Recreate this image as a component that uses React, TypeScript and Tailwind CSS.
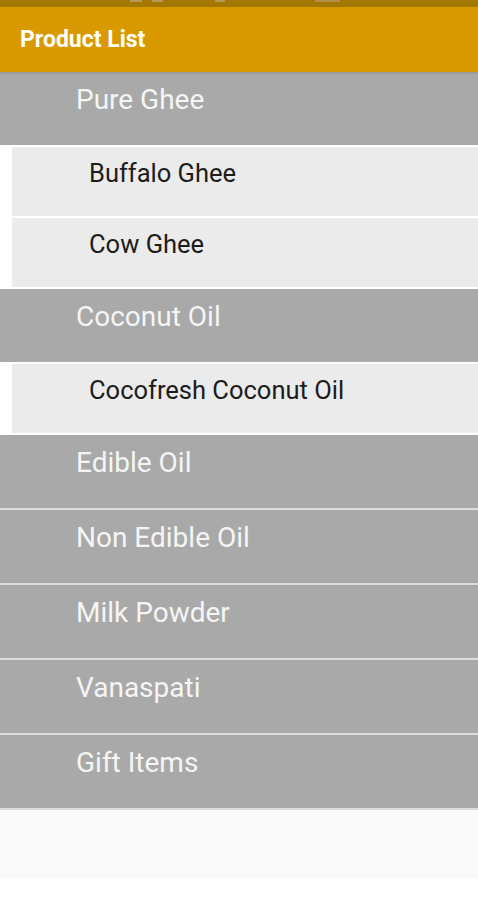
import React from "react";

type Group = { name: string; children?: string[] };

const groups: Group[] = [
  { name: "Pure Ghee", children: ["Buffalo Ghee", "Cow Ghee"] },
  { name: "Coconut Oil", children: ["Cocofresh Coconut Oil"] },
  { name: "Edible Oil" },
  { name: "Non Edible Oil" },
  { name: "Milk Powder" },
  { name: "Vanaspati" },
  { name: "Gift Items" },
];

export default function App() {
  return (
    <div
      className="w-[478px] h-[900px] bg-white flex flex-col"
      style={{ fontFamily: "Roboto, 'Noto Sans', sans-serif" }}
    >
      <div className="h-[7px] bg-[#a27800] flex items-start">
        <div className="ml-[130px] h-[2px] w-[12px] bg-[#b89a55]" />
        <div className="ml-[10px] h-[2px] w-[11px] bg-[#b89a55]" />
        <div className="ml-[52px] h-[2px] w-[10px] bg-[#b89a55]" />
        <div className="ml-[90px] h-[2px] w-[25px] bg-[#b08f48]" />
      </div>
      <div className="h-[65px] bg-[#d89a00] flex items-center px-5 shadow-[0_1px_2px_rgba(0,0,0,0.15)] z-10">
        <span className="text-[23px] font-bold text-white leading-none">Product List</span>
      </div>
      <div className="flex flex-col">
        {groups.map((g) => (
          <div key={g.name} className="flex flex-col">
            <div className="h-[73px] bg-[#a9a9a9] pl-[76px] pt-[12px]">
              <span className="text-[28px] leading-[32px] text-[#f5f5f5]">{g.name}</span>
            </div>
            <div className={`h-[2px] ${g.children ? "bg-white" : "bg-[#dcdcdc]"}`} />
            {g.children && (
              <div className="flex flex-col pl-[12px] bg-white">
                {g.children.map((c) => (
                  <div key={c} className="flex flex-col">
                    <div className="h-[69px] bg-[#ebebeb] pl-[77px] pt-[11px]">
                      <span className="text-[25.5px] leading-[30px] text-[#1c1c1c]">{c}</span>
                    </div>
                    <div className="h-[2px] bg-white" />
                  </div>
                ))}
              </div>
            )}
          </div>
        ))}
      </div>
      <div className="h-[69px] bg-[#fafafa]" />
      <div className="flex-1 bg-white" />
    </div>
  );
}
